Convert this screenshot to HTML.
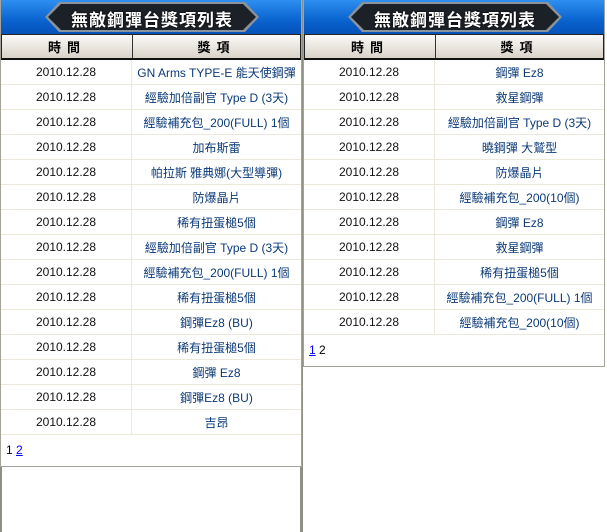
<!DOCTYPE html>
<html><head><meta charset="utf-8"><style>
*{margin:0;padding:0;box-sizing:border-box}
body{width:607px;height:532px;background:#fff;position:relative;overflow:hidden;font-family:"Liberation Sans","Noto Sans CJK TC",sans-serif;font-size:12px}
.vl{position:absolute;top:0;width:2px;height:532px;background:#8f8f84}
.panel{position:absolute;top:0;width:302px;border:1px solid #a3a39a;border-top:none;background:#fff}
.title{height:34px;background:linear-gradient(#2d8ff0,#0a63cf 60%,#0552b8);position:relative}
.badge{position:absolute;left:44px;top:2px;width:214px;height:30px}
.badge svg{position:absolute;left:0;top:0}
.badge span{position:absolute;left:0;width:214px;top:4px;text-align:center;color:#fff;font-weight:bold;font-size:17px;letter-spacing:1px;text-shadow:0 0 2px #000}
.hdr{display:flex;height:26px;background:linear-gradient(#fbfaf7,#d9d3c9);border:1px solid #222;border-bottom:2px solid #111;font-weight:bold;font-size:13px;letter-spacing:6px}
.hdr div{display:flex;align-items:center;justify-content:center}
.hdr .a{width:131px;border-right:1px solid #333}
.hdr .b{flex:1}
.row{display:flex;height:25px;border-bottom:1px solid #ece8da}
.row div{display:flex;align-items:center;justify-content:center;white-space:nowrap}
.row .a{width:131px;border-right:1px solid #ece8da;color:#111}
.row .b{flex:1;color:#0b3a78}
.pg{height:31px;padding:8px 0 0 5px;font-size:12px}
.pg a{color:#00f;text-decoration:underline}
</style></head><body>
<div class="vl" style="left:0"></div>
<div class="vl" style="left:300px"></div>
<div class="vl" style="left:302px;width:1px"></div>

<div class="panel" style="left:0">
<div class="title"><div class="badge"><svg width="214" height="30"><polygon points="14,0 200,0 214,15 200,30 14,30 0,15" fill="#8a939c"/><polygon points="16,2 198,2 211,15 198,28 16,28 3,15" fill="#1c2128"/></svg><span>無敵鋼彈台獎項列表</span></div></div>
<div class="hdr"><div class="a">時間</div><div class="b">獎項</div></div>
<div class="row"><div class="a">2010.12.28</div><div class="b">GN Arms TYPE-E 能天使鋼彈</div></div>
<div class="row"><div class="a">2010.12.28</div><div class="b">經驗加倍副官 Type D (3天)</div></div>
<div class="row"><div class="a">2010.12.28</div><div class="b">經驗補充包_200(FULL) 1個</div></div>
<div class="row"><div class="a">2010.12.28</div><div class="b">加布斯雷</div></div>
<div class="row"><div class="a">2010.12.28</div><div class="b">帕拉斯 雅典娜(大型導彈)</div></div>
<div class="row"><div class="a">2010.12.28</div><div class="b">防爆晶片</div></div>
<div class="row"><div class="a">2010.12.28</div><div class="b">稀有扭蛋槌5個</div></div>
<div class="row"><div class="a">2010.12.28</div><div class="b">經驗加倍副官 Type D (3天)</div></div>
<div class="row"><div class="a">2010.12.28</div><div class="b">經驗補充包_200(FULL) 1個</div></div>
<div class="row"><div class="a">2010.12.28</div><div class="b">稀有扭蛋槌5個</div></div>
<div class="row"><div class="a">2010.12.28</div><div class="b">鋼彈Ez8 (BU)</div></div>
<div class="row"><div class="a">2010.12.28</div><div class="b">稀有扭蛋槌5個</div></div>
<div class="row"><div class="a">2010.12.28</div><div class="b">鋼彈 Ez8</div></div>
<div class="row"><div class="a">2010.12.28</div><div class="b">鋼彈Ez8 (BU)</div></div>
<div class="row"><div class="a">2010.12.28</div><div class="b">吉昂</div></div>
<div class="pg">1 <a>2</a></div>
</div>

<div class="panel" style="left:303px">
<div class="title"><div class="badge"><svg width="214" height="30"><polygon points="14,0 200,0 214,15 200,30 14,30 0,15" fill="#8a939c"/><polygon points="16,2 198,2 211,15 198,28 16,28 3,15" fill="#1c2128"/></svg><span>無敵鋼彈台獎項列表</span></div></div>
<div class="hdr"><div class="a">時間</div><div class="b">獎項</div></div>
<div class="row"><div class="a">2010.12.28</div><div class="b">鋼彈 Ez8</div></div>
<div class="row"><div class="a">2010.12.28</div><div class="b">救星鋼彈</div></div>
<div class="row"><div class="a">2010.12.28</div><div class="b">經驗加倍副官 Type D (3天)</div></div>
<div class="row"><div class="a">2010.12.28</div><div class="b">曉鋼彈 大鷲型</div></div>
<div class="row"><div class="a">2010.12.28</div><div class="b">防爆晶片</div></div>
<div class="row"><div class="a">2010.12.28</div><div class="b">經驗補充包_200(10個)</div></div>
<div class="row"><div class="a">2010.12.28</div><div class="b">鋼彈 Ez8</div></div>
<div class="row"><div class="a">2010.12.28</div><div class="b">救星鋼彈</div></div>
<div class="row"><div class="a">2010.12.28</div><div class="b">稀有扭蛋槌5個</div></div>
<div class="row"><div class="a">2010.12.28</div><div class="b">經驗補充包_200(FULL) 1個</div></div>
<div class="row"><div class="a">2010.12.28</div><div class="b">經驗補充包_200(10個)</div></div>
<div class="pg"><a>1</a> 2</div>
</div>
</body></html>
